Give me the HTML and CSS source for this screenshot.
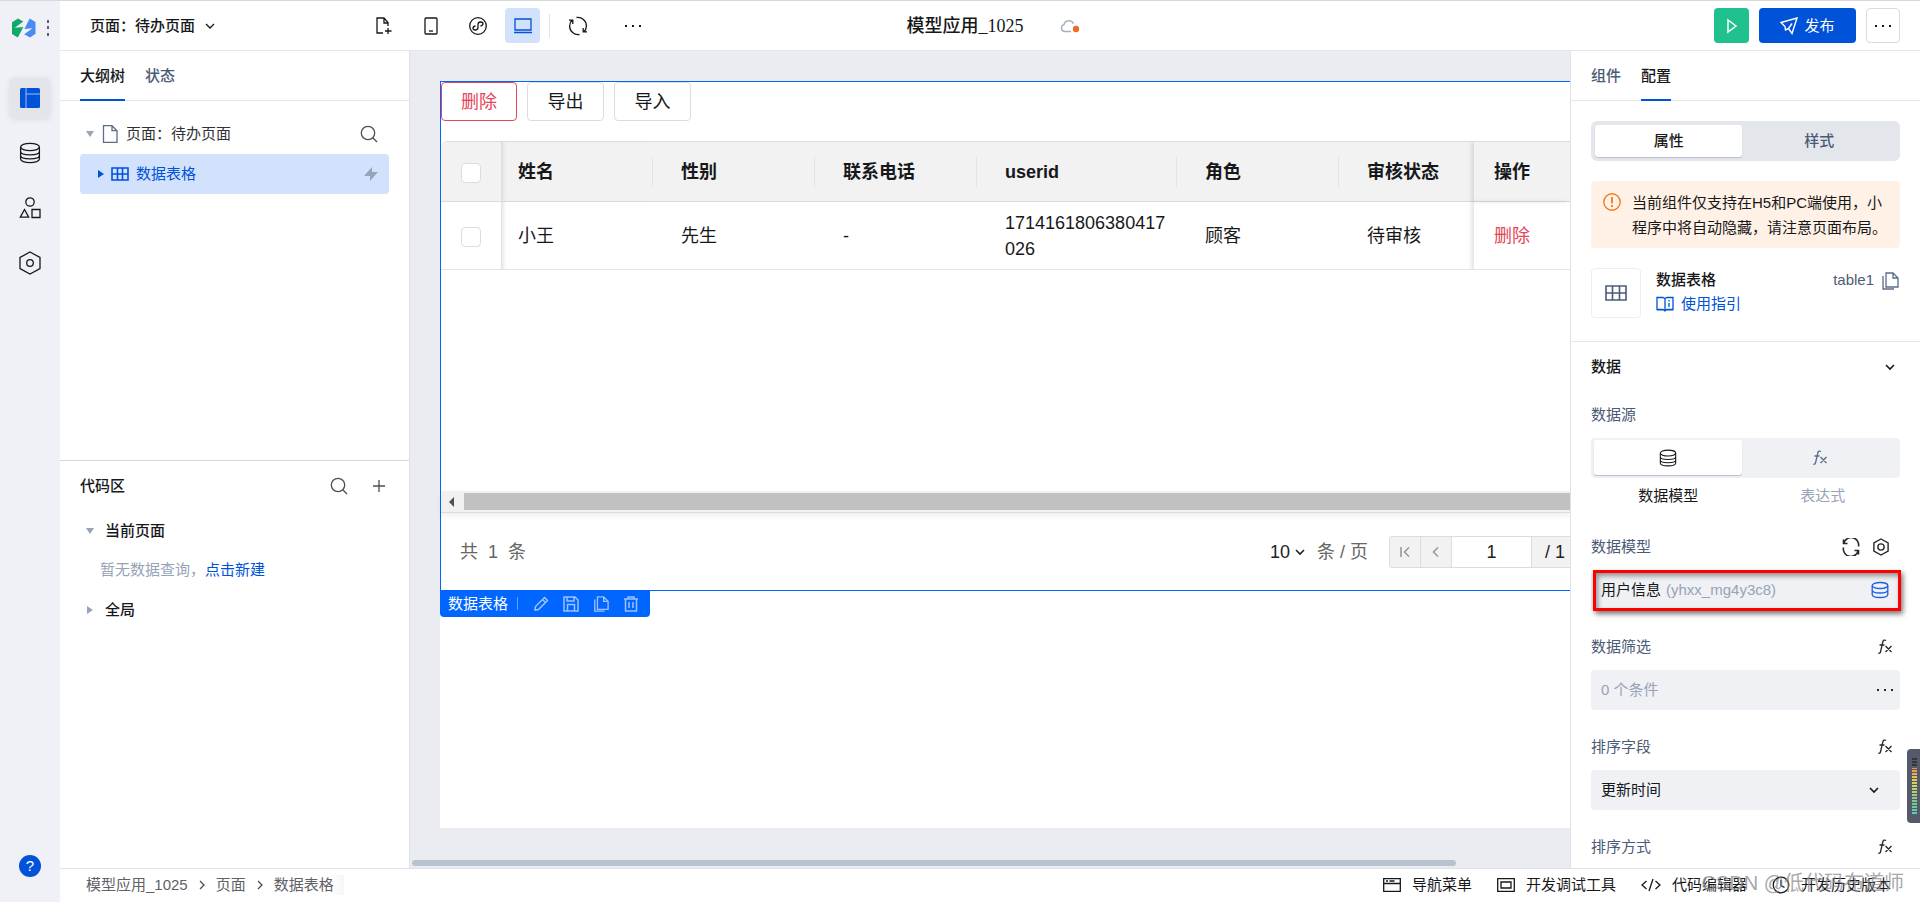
FILE: index.html
```html
<!DOCTYPE html>
<html lang="zh-CN">
<head>
<meta charset="utf-8">
<title>模型应用_1025</title>
<link rel="stylesheet" href="styles.css">
</head>
<body>
<svg class="sprite" aria-hidden="true">
  <symbol id="chevron" viewBox="0 0 12 12"><path d="M2 4l4 4 4-4"/></symbol>
  <symbol id="search" viewBox="0 0 18 18"><circle cx="8" cy="8" r="6.7"/><path d="M13 13l4 4"/></symbol>
  <symbol id="db" viewBox="0 0 22 22"><ellipse cx="11" cy="5" rx="9.4" ry="3.6"/><path d="M1.6 5v12c0 2 4 3.600 9.400 3.600s9.400-1.600 9.400-3.600V5M1.600 9.500c0 2 4 3.400 9.400 3.400s9.400-1.400 9.400-3.400M1.600 13.500c0 2 4 3.400 9.400 3.400s9.400-1.400 9.400-3.400"/></symbol>
  <symbol id="db2" viewBox="0 0 18 18"><ellipse cx="9" cy="4.500" rx="7.800" ry="3"/><path d="M1.200 4.500v9c0 1.700 3.500 3 7.800 3s7.800-1.300 7.800-3v-9M1.200 9c0 1.700 3.500 3 7.800 3s7.800-1.300 7.800-3"/></symbol>
  <symbol id="dots" viewBox="0 0 18 4"><path class="solid" d="M1 1h2v2H1zM8 1h2v2H8zM15 1h2v2h-2z"/></symbol>
  <symbol id="grid" viewBox="0 0 22 16"><path d="M1 1h20v14H1zM1 8h20M7.500 1v14M14.500 1v14"/></symbol>
  <symbol id="copy" viewBox="0 0 18 18"><path d="M5 1h7l5 5v9H5zM12 1v5h5M2 4v13h11"/></symbol>
  <symbol id="fx" viewBox="0 0 16 18"><path d="M9 2.500C7.500 1.500 6.200 2.200 5.800 4L3.600 13.500c-.3 1.500-1 2.100-2.300 1.700M2.500 7h5M8.500 8l6 6M14.500 8l-6 6"/></symbol>
  <symbol id="refresh" viewBox="0 0 18 18"><path d="M1.800 5.500A7.500 7.500 0 0 1 16.500 8.500M16.200 12.500A7.500 7.500 0 0 1 1.500 9.500M1.500 1.500v4h4M16.500 16.500v-4h-4"/></symbol>
  <symbol id="sync" viewBox="0 0 20 20"><path d="M8.500 1.500a8.500 8.500 0 0 1 9.900 8.500c0 2.500-1 4.500-2.600 6M11.500 18.500A8.500 8.500 0 0 1 1.600 10c0-2.500 1-4.500 2.600-6M1 4.200h3.800V8M19 15.800h-3.800V12"/></symbol>
  <symbol id="hexnut" viewBox="0 0 18 20"><path d="M9 1l8 4.500v9L9 19l-8-4.500v-9z"/><circle cx="9" cy="10" r="3.500"/></symbol>
</svg>

<div class="app">
  <nav class="rail" aria-label="主导航">
    <div class="brand">
      <svg width="24" height="20" viewBox="0 0 24 20"><path fill="#0fa968" d="M0 4.200L6 .5l5.300 3L2.800 9.800l8.600-.8L5.800 19.500 0 16z"/><path fill="#4a8af4" transform="rotate(180 12 10)" d="M.5 4.200L6 .5l5.800 3.300-8.400 6 8.200-.8L6.300 19.500.5 16z"/></svg>
      <svg width="4" height="16" viewBox="0 0 4 16"><path fill="#5a6478" d="M1 0h2v3H1zM1 6h2v3H1zM1 13h2v3H1z"/></svg>
    </div>
    <button class="rail-item active" aria-label="编辑"><svg width="20" height="20" viewBox="0 0 20 20"><rect width="20" height="20" rx="1.500" fill="#0052d9"/><path d="M6 0v20M6 6h14" stroke="#9dbdf2"/></svg></button>
    <button class="rail-item" aria-label="数据源"><svg class="ico" width="22" height="22"><use href="#db"/></svg></button>
    <button class="rail-item" aria-label="素材"><svg class="ico" width="22" height="22" viewBox="0 0 22 22"><circle cx="11" cy="5" r="4.200"/><path d="M5.500 12.500l4.200 7.700H1.300zM13 12.500h8v8h-8z"/></svg></button>
    <button class="rail-item" aria-label="设置"><svg class="ico" width="22" height="24" viewBox="0 0 22 24"><path d="M11 1l10 5.500v11L11 23 1 17.500v-11z"/><circle cx="11" cy="12" r="3.300"/></svg></button>
    <button class="help" aria-label="帮助">?</button>
  </nav>

  <header class="topbar">
    <div class="top-left">
      <button class="page-picker">页面：待办页面<svg class="ico" width="12" height="12"><use href="#chevron"/></svg></button>
      <div class="tools">
        <button class="tool" aria-label="新建页面"><svg class="ico" width="18" height="18" viewBox="0 0 18 18"><path d="M8 16H2V1h7l4 4.500V9M9 1v5h4M13 11v6M10 14h6.500"/></svg></button>
        <button class="tool" aria-label="手机"><svg class="ico" width="14" height="18" viewBox="0 0 14 18"><rect x="1" y="1" width="12" height="16" rx="1"/><path d="M5 14h4"/></svg></button>
        <button class="tool" aria-label="小程序"><svg class="ico" width="18" height="18" viewBox="0 0 18 18"><circle cx="9" cy="9" r="8.300"/><path d="M6.500 9C4.500 9.300 4 10.200 4 11.200c0 1 1 1.800 2.200 1.800C8 13 9 12 9 10.500v-3C9 6 10 5 11.600 5 13 5 14 5.800 14 6.800S13.200 8.700 11.500 9"/></svg></button>
        <button class="tool on" aria-label="电脑"><svg class="ico" width="20" height="16" viewBox="0 0 20 16"><path d="M2 1h16v11H2zM1 14.500h18"/></svg></button>
      </div>
      <span class="vline"></span>
      <div class="tools wide">
        <button class="tool" aria-label="刷新"><svg class="ico" width="20" height="20"><use href="#sync"/></svg></button>
        <button class="tool" aria-label="更多"><svg class="ico" width="18" height="4"><use href="#dots"/></svg></button>
      </div>
    </div>
    <div class="top-mid"><h1>模型应用_1025</h1>
      <svg width="20" height="16" viewBox="0 0 20 16"><path d="M11 13.500H4.500A3.500 3.500 0 0 1 4 6.700a5 5 0 0 1 9.500-1" fill="none" stroke="#a3aec0" stroke-width="1.400"/><circle cx="16" cy="11" r="3.200" fill="#ed6c2d"/></svg>
    </div>
    <div class="top-right">
      <button class="btn-run" aria-label="预览"><svg width="14" height="16" viewBox="0 0 14 16"><path d="M3 2l8 6-8 6z" fill="none" stroke="#fff" stroke-width="1.500"/></svg></button>
      <button class="btn-publish"><svg width="18" height="18" viewBox="0 0 18 18"><path d="M1 5.500L17 1l-5 15.500-3.500-5L5.500 13l-.5-3.500zM8.500 11.500L12 6.500" fill="none" stroke="#fff" stroke-width="1.400"/></svg>发布</button>
      <button class="btn-more" aria-label="更多操作"><svg class="ico" width="18" height="4"><use href="#dots"/></svg></button>
    </div>
  </header>

  <aside class="outline">
    <section class="tree">
      <div class="tabs" role="tablist"><button class="tab sel" role="tab">大纲树</button><button class="tab" role="tab">状态</button></div>
      <div class="tree-body">
        <div class="node root"><i class="tri down"></i><svg class="ico slate" width="16" height="18" viewBox="0 0 16 18"><path d="M1.500 .7h8.500l5 5v11.600H1.500zM10 .7v5h5"/></svg><span>页面：待办页面</span><button class="icon-btn end" aria-label="搜索"><svg class="ico grey" width="18" height="18"><use href="#search"/></svg></button></div>
        <div class="node picked"><i class="tri right"></i><svg class="ico bold" width="18" height="14" viewBox="0 0 18 14"><path d="M1 1h16v12H1zM1 7h16M6.500 1v12M11.500 1v12"/></svg><span>数据表格</span><svg class="end" width="16" height="14" viewBox="0 0 16 14"><path d="M9 0v5h6L7 14V9H1z" fill="#97a3b7"/></svg></div>
      </div>
    </section>
    <section class="code">
      <div class="code-head"><h2>代码区</h2><button class="icon-btn" aria-label="搜索代码"><svg class="ico grey" width="18" height="18"><use href="#search"/></svg></button><button class="icon-btn" aria-label="新增"><svg class="ico grey" width="14" height="14" viewBox="0 0 14 14"><path d="M7 1v12M1 7h12"/></svg></button></div>
      <div class="code-row"><i class="tri down"></i>当前页面</div>
      <p class="code-empty">暂无数据查询，<a href="#new">点击新建</a></p>
      <div class="code-row"><i class="tri right"></i>全局</div>
    </section>
  </aside>

  <main class="canvas">
    <div class="sheet">
      <section class="widget">
        <div class="actions"><button class="act danger">删除</button><button class="act">导出</button><button class="act">导入</button></div>
        <table class="grid">
          <colgroup><col class="c-check"><col class="c-name"><col class="c-std"><col class="c-std"><col class="c-id"><col class="c-std"><col class="c-state"><col></colgroup>
          <thead><tr><th class="pin"><input type="checkbox" aria-label="全选"></th><th class="first">姓名</th><th>性别</th><th>联系电话</th><th>userid</th><th>角色</th><th>审核状态</th><th class="op">操作</th></tr></thead>
          <tbody><tr><td class="pin"><input type="checkbox" aria-label="选择小王"></td><td class="first">小王</td><td>先生</td><td>-</td><td>1714161806380417026</td><td>顾客</td><td>待审核</td><td class="op"><a href="#delete">删除</a></td></tr></tbody>
        </table>
        <div class="blank"></div>
        <div class="hbar"><i class="arrow"></i><i class="thumb"></i></div>
        <div class="pager">
          <span class="total"><span>共</span><span>1</span><span>条</span></span>
          <div class="size"><select aria-label="每页条数"><option>10</option></select><svg class="ico bold" width="12" height="12"><use href="#chevron"/></svg></div>
          <span class="unit">条 / 页</span>
          <div class="steps"><button aria-label="首页"><svg width="12" height="12" viewBox="0 0 12 12"><path d="M2 1v10M10 1.500L5.500 6l4.500 4.500"/></svg></button><button aria-label="上一页"><svg width="12" height="12" viewBox="0 0 12 12"><path d="M8 1.500L3.500 6 8 10.500"/></svg></button><input type="text" value="1" aria-label="页码"><span>/ 1</span></div>
        </div>
        <div class="tag"><span>数据表格</span><i></i>
          <button aria-label="编辑"><svg width="16" height="16" viewBox="0 0 16 16"><path d="M2 14l.5-3.500L11.500 1.500l3 3L5.500 13.500zM9.500 3.500l3 3"/></svg></button>
          <button aria-label="保存"><svg width="16" height="16" viewBox="0 0 16 16"><path d="M1 1h11l3 3v11H1zM4 1v4h7V1M4.500 15V8.500h7V15"/></svg></button>
          <button aria-label="复制"><svg width="16" height="16" viewBox="0 0 18 18"><use href="#copy"/></svg></button>
          <button aria-label="移除"><svg width="16" height="16" viewBox="0 0 16 16"><path d="M1 3h14M5 3V1h6v2M2.500 3v12h11V3M6 6v6M10 6v6"/></svg></button>
        </div>
      </section>
    </div>
    <div class="canvas-bar"></div>
  </main>

  <aside class="config">
    <div class="tabs" role="tablist"><button class="tab" role="tab">组件</button><button class="tab sel" role="tab">配置</button></div>
    <div class="config-top">
      <div class="seg"><button class="on">属性</button><button>样式</button></div>
      <div class="alert"><svg width="18" height="18" viewBox="0 0 18 18"><circle cx="9" cy="9" r="8.200" fill="none" stroke="#f4791f" stroke-width="1.400"/><path d="M9 4v6.500M9 12v2" stroke="#f4791f" stroke-width="1.800"/></svg><p>当前组件仅支持在H5和PC端使用，小程序中将自动隐藏，请注意页面布局。</p></div>
      <div class="comp">
        <div class="thumbnail"><svg class="ico bold" width="22" height="16"><use href="#grid"/></svg></div>
        <div class="comp-info"><strong>数据表格</strong><a href="#guide"><svg class="ico" width="18" height="16" viewBox="0 0 18 16"><path d="M1 1.500h6l2 1 2-1h6v12h-6l-2 1.500-2-1.500H1zM9 2.500V15M1 13.800h16M13 4v1.500M13 7v4"/></svg>使用指引</a></div>
        <span class="comp-id">table1</span><button class="icon-btn" aria-label="复制标识"><svg class="ico slate" width="18" height="18"><use href="#copy"/></svg></button>
      </div>
    </div>
    <div class="group">
      <button class="group-head">数据<svg class="ico bold" width="12" height="12"><use href="#chevron"/></svg></button>
      <div class="label-row"><span>数据源</span></div>
      <div class="source"><button class="on" aria-label="数据模型"><svg class="ico" width="18" height="18"><use href="#db"/></svg></button><button aria-label="表达式"><svg class="ico slate" width="16" height="18"><use href="#fx"/></svg></button></div>
      <div class="source-names"><span>数据模型</span><span class="off">表达式</span></div>
      <div class="label-row"><label for="model">数据模型</label><button class="icon-btn push" aria-label="刷新模型"><svg class="ico bold" width="18" height="18"><use href="#refresh"/></svg></button><button class="icon-btn nut" aria-label="模型设置"><svg class="ico bold" width="16" height="18"><use href="#hexnut"/></svg></button></div>
      <div class="marked"><button class="field model" id="model">用户信息 <em>(yhxx_mg4y3c8)</em><svg class="ico" width="18" height="18"><use href="#db2"/></svg></button><i class="mark"></i></div>
      <div class="label-row"><label for="filter">数据筛选</label><button class="icon-btn push fx" aria-label="表达式"><svg class="ico" width="16" height="18"><use href="#fx"/></svg></button></div>
      <button class="field hint" id="filter">0 个条件<svg class="ico" width="18" height="4"><use href="#dots"/></svg></button>
      <div class="label-row"><label for="sort">排序字段</label><button class="icon-btn push fx" aria-label="表达式"><svg class="ico" width="16" height="18"><use href="#fx"/></svg></button></div>
      <div class="field pick"><select id="sort"><option>更新时间</option></select><svg class="ico bold" width="12" height="12"><use href="#chevron"/></svg></div>
      <div class="label-row"><span>排序方式</span><button class="icon-btn push fx" aria-label="表达式"><svg class="ico" width="16" height="18"><use href="#fx"/></svg></button></div>
    </div>
  </aside>

  <footer class="status">
    <nav class="crumbs" aria-label="路径"><a href="#app">模型应用_1025</a><svg class="ico grey" width="10" height="12" viewBox="0 0 10 12"><path d="M3 2l4 4-4 4"/></svg><a href="#page">页面</a><svg class="ico grey" width="10" height="12" viewBox="0 0 10 12"><path d="M3 2l4 4-4 4"/></svg><a href="#table" class="last">数据表格</a></nav>
    <div class="links">
      <button><svg class="ico" width="18" height="14" viewBox="0 0 18 14"><path d="M.7.700h16.600v12.600H.7zM.7 5.500h16.600M3 3h2M6.500 3h5"/></svg>导航菜单</button>
      <button><svg class="ico" width="18" height="14" viewBox="0 0 18 14"><path d="M.7.700h16.600v12.600H.7zM4 4h10v6H4z"/></svg>开发调试工具</button>
      <button><svg class="ico" width="20" height="14" viewBox="0 0 20 14"><path d="M5.500 3L1 7l4.500 4M14.500 3L19 7l-4.500 4M12 1L8 13"/></svg>代码编辑器</button>
      <button class="history"><svg class="ico" width="18" height="18" viewBox="0 0 18 18"><circle cx="9" cy="9" r="7.800"/><path d="M9 4v5.500l3.500 2"/></svg>开发历史版本</button>
    </div>
  </footer>
</div>
<div class="watermark">CSDN @低代码布道师</div>
<div class="meter"><i></i></div>
</body>
</html>
```
FILE: styles.css
```css
* { box-sizing: border-box; }
body { margin: 0; font: 15px/20px "Liberation Sans", "Noto Sans CJK SC", sans-serif; color: #17181a; background: #fff; }
button, input, select { font: inherit; color: inherit; margin: 0; padding: 0; border: 0; background: none; }
button { cursor: pointer; display: flex; align-items: center; }
a { color: #0052d9; text-decoration: none; }
h1, h2, p { margin: 0; }
svg { flex: none; display: block; }
.sprite { position: absolute; width: 0; height: 0; }
.ico { fill: none; stroke: currentColor; stroke-width: 1.3; }
.ico.bold { stroke-width: 1.6; }
.solid { fill: currentColor; stroke: none; }
.slate { color: #5c6b88; }
.grey { color: #4a4d54; }
.icon-btn { justify-content: center; }

.app { height: 100vh; display: grid; grid-template: 50px minmax(0, 1fr) 34px / 60px 350px minmax(0, 1fr) 350px; border-top: 1px solid #d9d9d9; }

.rail { grid-row: 1 / 4; background: #eff1f6; display: flex; flex-direction: column; align-items: center; gap: 15px; padding: 17px 0 25px; }
.brand { display: flex; align-items: center; gap: 10px; height: 20px; padding-left: 2px; margin-bottom: 25px; }
.rail-item { width: 40px; height: 40px; justify-content: center; border-radius: 4px; }
.rail-item.active { background: #e3e5eb; box-shadow: 0 1px 6px #d9dbe2; }
.help { margin-top: auto; width: 22px; height: 22px; border-radius: 50%; background: #0052d9; color: #fff; justify-content: center; }

.topbar { grid-column: 2 / 5; display: grid; grid-template-columns: 1fr auto 1fr; align-items: center; border-bottom: 1px solid #e3e6eb; padding: 0 20px 0 30px; }
.top-left { display: flex; align-items: center; }
.page-picker { gap: 9px; font-weight: 500; width: 276px; }
.tools { display: flex; gap: 12px; }
.tools.wide { gap: 20px; margin-left: 10px; }
.tool { width: 35px; height: 35px; border-radius: 4px; justify-content: center; }
.tool.on { background: #d3e2fc; color: #0052d9; margin-left: -2px; }
.vline { width: 1px; height: 24px; background: #e0e2e8; margin-left: 9px; }
.top-mid { display: flex; align-items: center; gap: 36px; padding-right: 4px; }
.top-mid h1 { font: 500 18px/24px "Liberation Serif", "Noto Sans CJK SC", serif; }
.top-right { display: flex; justify-content: flex-end; gap: 10px; }
.top-right button { height: 35px; justify-content: center; border-radius: 4px; }
.btn-run { width: 35px; background: #20c08f; }
.btn-publish { width: 97px; background: #0052d9; color: #fff; gap: 6px; }
.btn-more { width: 34px; }
.top-right .btn-more { border: 1px solid #d8dbe3; }

.tabs { display: flex; gap: 20px; height: 50px; padding: 0 20px; border-bottom: 1px solid #e3e6eb; }
.tab { height: 50px; padding-top: 2px; color: #4b5b76; border-bottom: 2px solid transparent; font-weight: 500; }
.tab.sel { color: #17181a; border-color: #0052d9; }

.outline { display: grid; grid-template-rows: 409px minmax(0, 1fr); border-right: 1px solid #dfe2e8; }
.tree-body { padding: 13px 20px; }
.node { display: flex; align-items: center; height: 40px; border-radius: 4px; }
.root { padding: 0 11px 0 6px; gap: 8px; color: #303236; }
.picked { padding: 0 10px 0 18px; background: #d3e2fc; color: #0052d9; gap: 7px; }
.end { margin-left: auto; }
.tri { flex: none; width: 0; height: 0; border: 4px solid transparent; }
.tri.down { border-top: 6px solid #97a3b7; border-bottom: 0; }
.tri.right { border-left: 6px solid #97a3b7; border-right: 0; }
.picked .tri.right { border-left-color: #0052d9; }
.code { border-top: 1px solid #d2d9e5; padding: 0 20px; }
.code-head { display: flex; align-items: center; gap: 24px; height: 50px; padding-right: 3px; }
.code-head h2 { font-size: 15px; line-height: 20px; font-weight: 500; margin-right: auto; }
.code-row { display: flex; align-items: center; gap: 11px; height: 39px; padding-left: 6px; font-weight: 500; }
.code-row .tri.right { margin: 0 1px; }
.code-empty { padding-left: 20px; line-height: 40px; color: #97a3b7; }

.canvas { background: #ebecf1; padding: 30px 0 0 30px; display: flex; flex-direction: column; overflow: hidden; position: relative; }
.sheet { flex: 1; background: #fff; margin-bottom: 40px; }
.canvas-bar { position: absolute; left: 2px; bottom: 2px; width: 90%; height: 6px; border-radius: 3px; background: #b9c2cf; }
.widget { position: relative; border: 1px solid #0066ff; border-right: 0; font-size: 18px; line-height: 26px; }
.actions { display: flex; gap: 10px; }
.act { width: 77px; height: 39px; justify-content: center; border: 1px solid #dcdcdc; border-radius: 4px; }
.act.danger { width: 76px; border-color: #e54558; color: #e54558; }
.grid { width: 100%; table-layout: fixed; border-collapse: separate; border-spacing: 0; margin-top: 20px; border-top: 1px solid #dcdcdc; border-top-left-radius: 6px; overflow: hidden; }
.c-check { width: 60px; } .c-name { width: 152px; } .c-std { width: 162px; } .c-id { width: 200px; } .c-state { width: 135px; }
.grid th, .grid td { text-align: left; padding: 0 8px 0 28px; border-bottom: 1px solid #e4e4e4; word-break: break-all; position: relative; }
.grid th { height: 60px; background: #f2f2f2; border-color: #dadada; font-weight: 700; }
.grid td { height: 68px; }
.grid .first { padding-left: 17px; box-shadow: inset 5px 0 5px -4px #cfcfcf; }
.grid .op { padding-left: 20px; box-shadow: -3px 0 4px #0000001a; }
.grid th { background-image: linear-gradient(#e3e3e3, #e3e3e3); background-size: 1px 30px; background-position: right center; background-repeat: no-repeat; }
.grid th.pin, .grid th:nth-child(7), .grid th.op { background-image: none; }
.grid .pin { padding: 0 0 0 20px; }
.grid a { color: #e54558; }
.grid input { appearance: none; display: block; width: 20px; height: 20px; border: 1px solid #dcdcdc; border-radius: 4px; background: #fff; margin-top: 3px; }
.blank { height: 221px; }
.hbar { display: flex; align-items: center; height: 22px; padding-left: 8px; background: #f1f1f1; border-bottom: 1px solid #dcdcdc; box-shadow: 0 3px 6px #00000010; }
.arrow { border: 5px solid transparent; border-right-color: #505050; border-left: 0; margin-right: 10px; }
.thumb { flex: 1; height: 17px; background: #c1c1c1; }
.pager { display: flex; align-items: center; height: 77px; padding: 1px 0 0 19px; color: #666; }
.total { display: flex; gap: 10px; margin-right: auto; }
.size { display: flex; align-items: center; gap: 4px; color: #222; }
.size select { appearance: none; width: 20px; }
.unit { margin: 0 21px 0 11px; }
.steps { display: flex; height: 32px; border: 1px solid #dcdcdc; border-right: 0; border-radius: 4px 0 0 4px; background: #f2f2f2; color: #222; }
.steps button { width: 31px; justify-content: center; border-right: 1px solid #dcdcdc; }
.steps svg { fill: none; stroke: #999; stroke-width: 1.6; }
.steps input { width: 80px; text-align: center; background: #fff; border-right: 1px solid #dcdcdc; }
.steps span { padding: 2px 5px 0 13px; }
.tag { position: absolute; left: -1px; top: 100%; display: flex; align-items: center; gap: 14px; height: 27px; padding: 0 11px 0 8px; background: #0066ff; border-radius: 0 0 4px 4px; color: #fff; font-size: 15px; line-height: 20px; }
.tag i { width: 1px; height: 13px; background: #669fff; margin: 0 1px 0 -5px; }
.tag svg { fill: none; stroke: #9cc2ff; stroke-width: 1.5; }

.config { border-left: 1px solid #dfe2e8; overflow: hidden; }
.config-top { padding: 20px 20px 23px; border-bottom: 1px solid #e3e6eb; }
.seg { display: flex; height: 40px; padding: 4px; background: #e3e6eb; border-radius: 6px; font-weight: 500; color: #4b5b76; }
.seg button, .source button { flex: 1; justify-content: center; border-radius: 3px; }
.seg button.on, .source button.on { flex: 0 0 49%; background: #fff; color: #17181a; box-shadow: 0 1px 1px #b8c0ce; }
.alert { display: flex; gap: 11px; margin: 20px 0; padding: 9px 12px 8px; background: #fff1e6; border-radius: 4px; line-height: 25px; }
.alert svg { margin-top: 3px; }
.comp { display: flex; align-items: flex-start; color: #4b5b76; }
.thumbnail { width: 50px; height: 50px; display: flex; align-items: center; justify-content: center; border: 1px solid #eceef2; border-radius: 4px; margin-right: 15px; }
.comp-info { flex: 1; line-height: 24px; color: #17181a; }
.comp-info strong { display: block; font-weight: 500; }
.comp-info a { display: flex; align-items: center; gap: 7px; }
.comp-id { line-height: 24px; margin-right: 7px; }
.comp .icon-btn { height: 26px; margin-right: 1px; }
.group { padding: 0 20px; }
.group-head { width: 100%; height: 50px; justify-content: space-between; padding-right: 4px; font-weight: 500; }
.label-row { display: flex; align-items: center; height: 46px; color: #4b5b76; }
.label-row .icon-btn { color: #26282c; }
.push { margin-left: auto; }
.nut { margin: 0 11px 0 13px; }
.fx { margin-right: 7px; }
.source { display: flex; height: 40px; padding: 2px 3px 3px; background: #eff1f5; border-radius: 4px; }
.source-names { display: flex; line-height: 36px; margin-bottom: 10px; }
.source-names span { flex: 1; text-align: center; }
.source-names .off { color: #97a3b7; }
.field { display: flex; align-items: center; width: 100%; height: 40px; margin-bottom: 14px; padding: 0 6px 0 10px; background: #eff1f5; border-radius: 4px; }
.field svg { margin-left: auto; }
.model { padding-right: 11px; }
.model svg { color: #1f5fe0; }
.field em { font-style: normal; color: #97a3b7; margin-left: 5px; }
.hint { color: #97a3b7; }
.hint svg { color: #26282c; }
.pick { padding-right: 20px; }
.pick select { flex: 1; appearance: none; }
.marked { position: relative; }
.mark { position: absolute; inset: 0 -1px -1px 2px; border: 3px solid #ff0000; box-shadow: 2px 3px 5px #00000088, inset 2px 3px 5px #00000066; pointer-events: none; }

.status { grid-column: 2 / 5; display: flex; align-items: center; justify-content: space-between; border-top: 1px solid #dfe2ea; padding: 0 29px 2px 26px; background: #fff; }
.crumbs { display: flex; align-items: center; gap: 9px; }
.crumbs a { color: #5e6166; }
.crumbs .last { padding-right: 10px; background: linear-gradient(90deg, #fff 80%, #f5f6f9); }
.links { display: flex; gap: 25px; }
.links button { gap: 11px; }
.watermark { position: absolute; right: 16px; bottom: 5px; font-size: 20px; line-height: 28px; color: #8a8c90; opacity: .75; pointer-events: none; }
.meter { position: absolute; right: 0; top: 749px; width: 13px; height: 74px; padding: 9px 3px 8px 5px; background: #555a6a; border-radius: 4px 0 0 4px; }
.meter i { display: block; height: 57px; background: repeating-linear-gradient(#555a6a00 0 2px, #555a6a 2px 3px), linear-gradient(#33363f 0 16%, #f28b5b 18%, #e8c957 36%, #c9d860 50%, #7fc98a 75%, #4fd0b4); }
```
